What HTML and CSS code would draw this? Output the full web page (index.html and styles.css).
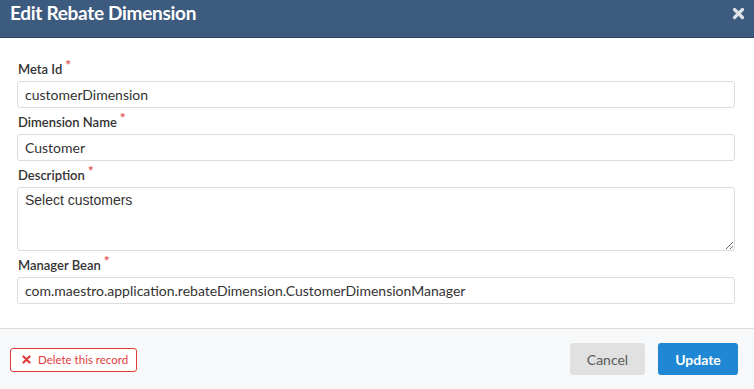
FILE: index.html
```html
<!DOCTYPE html>
<html lang="en">
<head>
    <meta charset="UTF-8">
    <title>Edit Rebate Dimension</title>
    <link rel="stylesheet" href="styles.css">
</head>
<body>
    <div class="modal">
        <div class="modal-header">
            <h1>Edit Rebate Dimension</h1>
            <span class="close">
                <svg width="13" height="13" viewBox="0 0 13 13"><path d="M2.5 2.5 L10.5 10.5 M10.5 2.5 L2.5 10.5" stroke="#dde2e8" stroke-width="3.2" stroke-linecap="round"/></svg>
            </span>
        </div>

        <div class="modal-body">
            <div class="field">
                <label>Meta Id<span class="req">*</span></label>
                <input class="input" type="text" value="customerDimension">
            </div>
            <div class="field">
                <label>Dimension Name<span class="req">*</span></label>
                <input class="input" type="text" value="Customer">
            </div>
            <div class="field">
                <label>Description<span class="req">*</span></label>
                <textarea class="input textarea">Select customers</textarea>
            </div>
            <div class="field">
                <label>Manager Bean<span class="req">*</span></label>
                <input class="input" type="text" value="com.maestro.application.rebateDimension.CustomerDimensionManager">
            </div>
        </div>

        <div class="modal-footer">
            <button class="btn-delete">
                <svg class="del-icon" width="9" height="9" viewBox="0 0 9 9"><path d="M1.5 1.5 L7.5 7.5 M7.5 1.5 L1.5 7.5" stroke="#e03a3a" stroke-width="2.2" stroke-linecap="round"/></svg>
                Delete this record
            </button>
            <div class="actions">
                <button class="btn btn-cancel">Cancel</button>
                <button class="btn btn-update">Update</button>
            </div>
        </div>
    </div>
</body>
</html>
```

FILE: styles.css
```css
body {
    margin: 0;
    font-family: Lato, "Liberation Sans", sans-serif;
    background: #fff;
    color: #333;
}
.modal {
    width: 754px;
    height: 389px;
    display: flex;
    flex-direction: column;
}
.modal-header {
    background: #3d5a7f;
    border-bottom: 1px solid #2c4360;
    display: flex;
    align-items: center;
    justify-content: space-between;
    padding: 0 9px 12px 10px;
    height: 25px;
}
.modal-header h1 {
    margin: 0;
    color: #fff;
    font-size: 19px;
    font-weight: bold;
    letter-spacing: -0.3px;
    line-height: 25px;
}
.close {
    display: flex;
    margin-top: 1px;
}
.modal-body {
    padding: 21px 19px 0 17px;
    flex: 1;
}
.field {
    margin-bottom: 4px;
}
.field label {
    display: block;
    height: 22px;
    line-height: 20px;
    font-size: 13px;
    font-weight: 600;
    color: #333;
    padding-left: 1px;
}
.req {
    color: #e54b4b;
    font-size: 14px;
    vertical-align: top;
    margin-left: 3px;
    position: relative;
    top: -4px;
}
.input {
    display: block;
    width: 100%;
    height: 27px;
    box-sizing: border-box;
    border: 1px solid #dcdcdc;
    border-radius: 3px;
    padding: 0 7px;
    font-family: Lato, sans-serif;
    font-size: 14px;
    color: #333;
    outline: none;
}
.textarea {
    height: 64px;
    padding: 4px 7px;
    font-family: "Liberation Sans", Arial, sans-serif;
    resize: vertical;
}
.modal-footer {
    height: 60px;
    flex: none;
    background: #f7f8fa;
    border-top: 1px solid #dcdcdc;
    display: flex;
    align-items: center;
    justify-content: space-between;
    padding: 0 16px 0 10px;
}
.btn-delete {
    height: 24px;
    width: 127px;
    white-space: nowrap;
    border: 1px solid #e03a3a;
    border-radius: 3px;
    background: #fff;
    color: #e03a3a;
    font-family: Lato, sans-serif;
    font-size: 11.5px;
    display: flex;
    align-items: center;
    gap: 7px;
    padding: 0 11px;
    margin-top: 1px;
}
.del-icon {
    flex: none;
}
.actions {
    display: flex;
    gap: 13px;
}
.btn {
    height: 32px;
    border: none;
    border-radius: 3px;
    font-family: Lato, sans-serif;
    font-size: 14px;
    cursor: pointer;
}
.btn-cancel {
    width: 75px;
    background: #e1e1e1;
    color: #5a5a5a;
}
.btn-update {
    width: 80px;
    background: #1f87d4;
    color: #fff;
    font-weight: bold;
}
```
